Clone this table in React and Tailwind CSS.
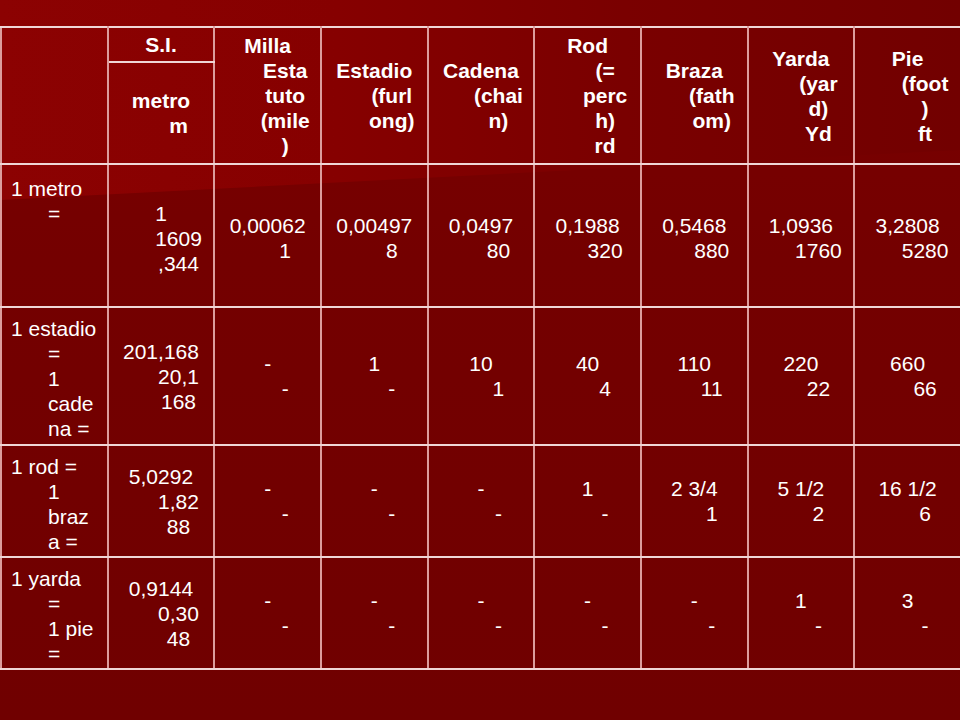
import React from 'react'

const header = [
    ["Milla", "Esta", "tuto", "(mile", ")"],
    ["Estadio", "(furl", "ong)"],
    ["Cadena", "(chai", "n)"],
    ["Rod", "(=", "perc", "h)", "rd"],
    ["Braza", "(fath", "om)"],
    ["Yarda", "(yar", "d)", "Yd"],
    ["Pie", "(foot", ")", "ft"],
]

const rows = [
    {
        height: "h-[143px]",
        first: ["1 metro", "="],
        cells: [
            ["1", "1609", ",344"],
            ["0,00062", "1"],
            ["0,00497", "8"],
            ["0,0497", "80"],
            ["0,1988", "320"],
            ["0,5468", "880"],
            ["1,0936", "1760"],
            ["3,2808", "5280"],
        ],
        shift: true
    },
    {
        height: "h-[138px]",
        first: ["1 estadio", "=", "1", "cade", "na ="],
        cells: [
            ["201,168", "20,1", "168"],
            ["-", "-"],
            ["1", "-"],
            ["10", "1"],
            ["40", "4"],
            ["110", "11"],
            ["220", "22"],
            ["660", "66"],
        ]
    },
    {
        height: "h-[112px]",
        first: ["1 rod =", "1", "braz", "a ="],
        cells: [
            ["5,0292", "1,82", "88"],
            ["-", "-"],
            ["-", "-"],
            ["-", "-"],
            ["1", "-"],
            ["2 3/4", "1"],
            ["5 1/2", "2"],
            ["16 1/2", "6"],
        ]
    },
    {
        height: "h-[112px]",
        first: ["1 yarda", "=", "1 pie", "="],
        cells: [
            ["0,9144", "0,30", "48"],
            ["-", "-"],
            ["-", "-"],
            ["-", "-"],
            ["-", "-"],
            ["-", "-"],
            ["1", "-"],
            ["3", "-"],
        ]
    },
]

// centered text, later lines pushed right like a hanging indent
const Centered = ({ lines }) => (
    <div>
        {lines.map((line, i) => (
            <div key={i} className={i === 0 ? "whitespace-nowrap text-center px-[10px]" : "whitespace-nowrap text-center pl-[45px] pr-[10px]"}>
                {line}
            </div>
        ))}
    </div>
)

const LeftLines = ({ lines }) => (
    <div>
        {lines.map((line, i) => (
            <div key={i} className={i === 0 ? "whitespace-nowrap pl-[9px]" : "whitespace-nowrap pl-[46px]"}>
                {line}
            </div>
        ))}
    </div>
)

const cellBorder = "border-2 border-x-[#dc9d9d] border-y-[#efd6d6] p-0"

const App = () => {
    return (
        <div className="relative w-[960px] h-[720px] overflow-hidden bg-[linear-gradient(180deg,#7a0000_0px,#740000_260px,#700000_720px)] font-['Liberation_Sans',Arial,sans-serif] text-white text-[21px] leading-[25px]">
            <div className="absolute inset-0 bg-[linear-gradient(90deg,#8c0202_0%,#860000_35%,#7a0000_65%,#720000_100%)] [clip-path:polygon(0_0,100%_0,100%_150px,0_200px)]"></div>
            <div className="relative pt-[26px]">
                <table className="w-[960px] table-fixed border-collapse">
                    <colgroup>
                        {Array(9).fill(null).map((val, ind) => (
                            <col key={ind} className="w-[106.67px]" />
                        ))}
                    </colgroup>
                    <thead className="font-bold">
                        <tr className="h-[35px]">
                            <th rowSpan={2} className={cellBorder}></th>
                            <th className={cellBorder + " align-middle"}>
                                <Centered lines={["S.I."]} />
                            </th>
                            {header.map((lines, ind) => (
                                <th key={ind} rowSpan={2} className={cellBorder + " align-middle"}>
                                    <Centered lines={lines} />
                                </th>
                            ))}
                        </tr>
                        <tr className="h-[102px]">
                            <th className={cellBorder + " align-middle"}>
                                <Centered lines={["metro", "m"]} />
                            </th>
                        </tr>
                    </thead>
                    <tbody className="font-normal">
                        {rows.map((row, index) => (
                            <tr key={index} className={row.height}>
                                <td className={cellBorder + (row.shift ? " align-top pt-[11px]" : " align-top pt-[8px]")}>
                                    <LeftLines lines={row.first} />
                                </td>
                                {row.cells.map((lines, ind) => (
                                    <td key={ind} className={cellBorder + (row.shift ? " align-middle pt-[5px]" : " align-middle")}>
                                        <Centered lines={lines} />
                                    </td>
                                ))}
                            </tr>
                        ))}
                    </tbody>
                </table>
            </div>
        </div>
    )
}

export default App
